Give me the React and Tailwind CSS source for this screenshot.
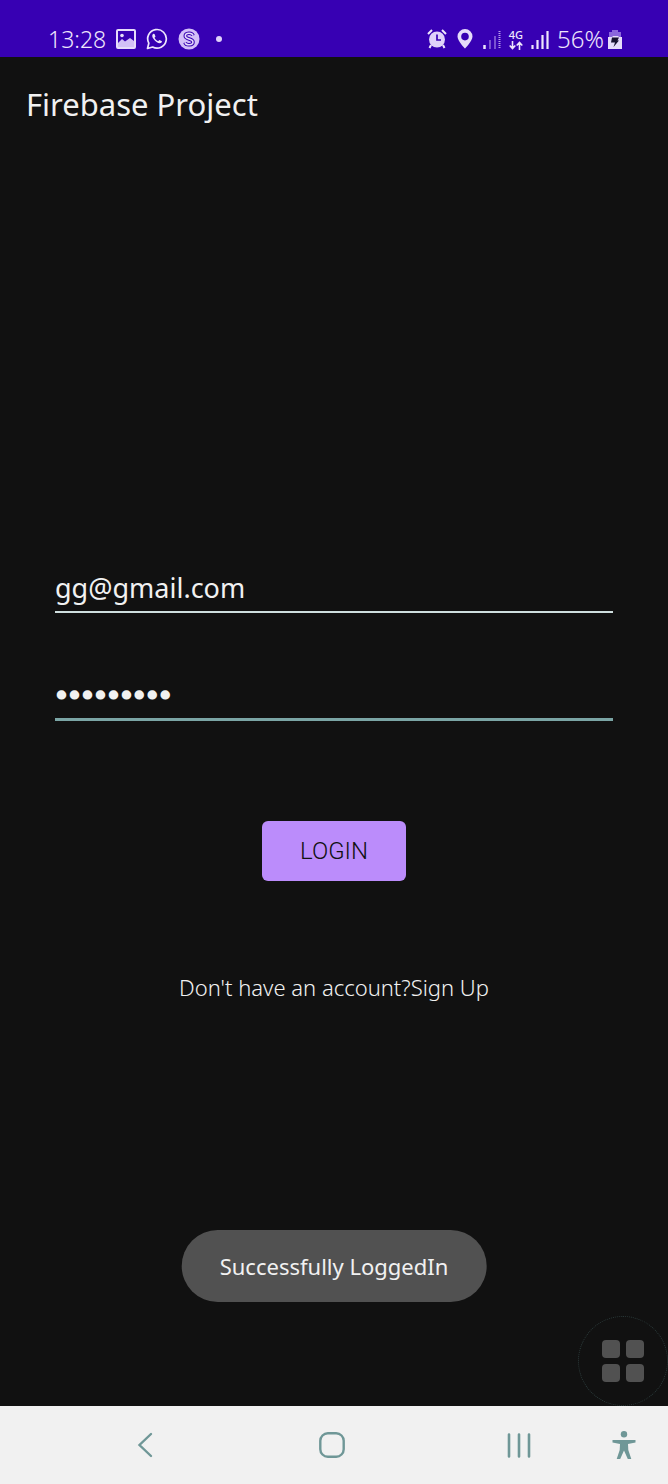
function ImageIcon() {
  return (
    <svg width="20" height="20" viewBox="0 0 20 20" aria-hidden="true">
      <rect x="1" y="1" width="18" height="18" rx="1" fill="none" stroke="#e6dcfa" strokeWidth="2" />
      <circle cx="6" cy="6.5" r="1.8" fill="#e6dcfa" />
      <path d="M2 14l4-4 3 2.500 5-3.500L18 12v6H2z" fill="#d3c0f7" />
    </svg>
  );
}

function ChatIcon() {
  return (
    <svg width="22" height="22" viewBox="0 0 22 22" aria-hidden="true">
      <path d="M1.500 20.500l1.300-5.300A9.300 9.300 0 1 1 6.600 19z" fill="none" stroke="#eee6fc" strokeWidth="1.700" strokeLinejoin="round" />
      <path d="M7.300 5.800c-1.500 1-1.400 3 .3 5.300 1.700 2.400 4.200 4.200 6.200 4.200 1.200 0 2.100-.8 2.200-2l-2.600-1.400-1.300 1.300c-1.700-.7-2.900-2-3.600-3.500l1-1.300-1-2.500z" fill="#eee6fc" />
    </svg>
  );
}

function CoinIcon() {
  return (
    <svg width="22" height="22" viewBox="0 0 22 22" aria-hidden="true">
      <circle cx="11" cy="11" r="10.500" fill="#d3bff8" />
      <path d="M15 7.500C14 4.300 7.300 4.500 7.300 8c0 3.700 7.700 2.300 7.700 6 0 3.500-7 3.800-8 .5" fill="none" stroke="#3700b3" strokeWidth="3.600" />
      <path d="M15 7.500C14 4.300 7.300 4.500 7.300 8c0 3.700 7.700 2.300 7.700 6 0 3.500-7 3.800-8 .5" fill="none" stroke="#e6dcfa" strokeWidth="1.500" />
    </svg>
  );
}

function AlarmIcon() {
  return (
    <svg width="20" height="20" viewBox="0 0 20 20" aria-hidden="true">
      <circle cx="10" cy="10.500" r="8" fill="#e0d2fa" />
      <path d="M1 5l4-4M19 5l-4-4M4 16l-1.500 3M16 16l1.500 3" stroke="#eee6fc" strokeWidth="2" />
      <path d="M10 5.500V11h4" fill="none" stroke="#3700b3" strokeWidth="1.700" />
    </svg>
  );
}

function PinIcon() {
  return (
    <svg width="16" height="20" viewBox="0 0 16 20" aria-hidden="true">
      <path fillRule="evenodd" d="M8 0a7.500 7.500 0 0 0-7.500 7.500C.5 12 8 19.500 8 19.500S15.500 12 15.500 7.500A7.500 7.500 0 0 0 8 0zm0 3.800a3.800 3.800 0 1 1 0 7.600 3.800 3.800 0 0 1 0-7.600z" fill="#e6dcfa" />
    </svg>
  );
}

function WeakSignalIcon() {
  return (
    <svg width="18" height="19" viewBox="0 0 18 19" aria-hidden="true">
      <path d="M1.500 15v4" stroke="#eee6fc" strokeWidth="2.500" />
      <path d="M7 10v9M12 6v13" stroke="#9d7fe0" strokeWidth="1.300" />
      <path d="M16.500 1v18" stroke="#b9a0ec" strokeWidth="2" strokeDasharray="1 1" />
    </svg>
  );
}

function DataArrowsIcon() {
  return (
    <svg width="14" height="9" viewBox="0 0 14 9" aria-hidden="true">
      <path d="M3.500 0v7M.7 4.500l2.800 3 2.800-3M10.500 9V2M7.700 4.500l2.800-3 2.800 3" fill="none" stroke="#eee6fc" strokeWidth="1.600" />
    </svg>
  );
}

function SignalIcon() {
  return (
    <svg width="18" height="19" viewBox="0 0 18 19" aria-hidden="true">
      <path d="M1.500 15v4" stroke="#eee6fc" strokeWidth="2.200" />
      <path d="M6.500 10v9M11.500 5v14M16.500 1v18" stroke="#eee6fc" strokeWidth="2.200" />
    </svg>
  );
}

function BatteryIcon() {
  return (
    <svg width="14" height="20" viewBox="0 0 14 20" aria-hidden="true">
      <path d="M4 1h6v2h3v5H1V3h3z" fill="#8b66dc" />
      <path d="M0 8h4l1-1h5l1 1h3v12H0z" fill="#e6dcfa" />
      <path d="M4 8.500h7L9.500 11.500h1.500L5.500 18l1.500-4.500H3z" fill="#171130" />
    </svg>
  );
}

function BackIcon() {
  return (
    <svg width="16" height="26" viewBox="0 0 16 26" aria-hidden="true">
      <path d="M14 2L2.500 13 14 24" fill="none" stroke="#6f9797" strokeWidth="2.400" strokeLinecap="round" />
    </svg>
  );
}

function HomeIcon() {
  return (
    <svg width="26" height="26" viewBox="0 0 26 26" aria-hidden="true">
      <rect x="1.300" y="1.300" width="23.400" height="23.400" rx="7.500" fill="none" stroke="#6f9797" strokeWidth="2.400" />
    </svg>
  );
}

function RecentsIcon() {
  return (
    <svg width="24" height="25" viewBox="0 0 24 25" aria-hidden="true">
      <path d="M2 1.500v22M12 1.500v22M22 1.500v22" stroke="#6f9797" strokeWidth="2.600" strokeLinecap="round" />
    </svg>
  );
}

function PersonIcon() {
  return (
    <svg width="24" height="28" viewBox="0 0 24 28" aria-hidden="true">
      <circle cx="12" cy="3.300" r="3.200" fill="#6f9797" />
      <path d="M.5 9h23v2.500L16 13l.3 6 3 9h-3.500L12 19.500 8.200 28H4.700l3-9 .3-6L.5 11.500z" fill="#6f9797" />
    </svg>
  );
}

function StatusBar() {
  return (
    <header className="flex h-[57px] items-end justify-between bg-[#3700b3] pb-1 pl-12 pr-[46px] text-[#eee6fc]">
      <div className="flex h-7 items-center gap-2.5">
        <span className="text-[23px] font-light leading-7">13:28</span>
        <ImageIcon />
        <ChatIcon />
        <CoinIcon />
        <span className="ml-1.5 size-1.5 rounded-full bg-[#e0d2fa]" />
      </div>
      <div className="flex h-7 items-center gap-2">
        <div className="flex items-center gap-2.5">
          <AlarmIcon />
          <PinIcon />
          <WeakSignalIcon />
        </div>
        <div className="flex flex-col items-center">
          <span className="text-[11px] font-medium leading-3">4G</span>
          <DataArrowsIcon />
        </div>
        <SignalIcon />
        <div className="flex items-center gap-1">
          <span className="text-2xl font-light leading-7">56%</span>
          <BatteryIcon />
        </div>
      </div>
    </header>
  );
}

export default function App() {
  return (
    <div className="relative flex min-h-screen flex-col bg-[#111111] font-['Noto_Sans',sans-serif] text-[#f1f1f1]">
      <StatusBar />
      <h1 className="px-[26px] py-[27px] text-[31px] leading-10">Firebase Project</h1>

      <main className="flex flex-1 flex-col justify-center px-[55px]">
        <form className="flex flex-col items-center" onSubmit={(e) => e.preventDefault()}>
          <input
            type="email"
            aria-label="Email"
            defaultValue="gg@gmail.com"
            className="h-[60px] w-full border-b-2 border-[#cfdede] bg-transparent pt-3 text-[27px] outline-none"
          />
          <input
            type="password"
            aria-label="Password"
            defaultValue="123456789"
            className="mt-12 h-[60px] w-full border-b-3 border-[#7ba5a5] bg-transparent pt-3 font-['DejaVu_Sans',sans-serif] text-[22px] outline-none [-webkit-text-stroke:3px_#f1f1f1]"
          />
          <button type="submit" className="mt-[100px] h-[60px] w-36 rounded-md bg-[#bb8cfb] font-[Roboto,sans-serif] text-2xl font-light text-[#111111]">
            LOGIN
          </button>
          <p className="mt-[88px] text-[22px] font-light leading-9">
            Don't have an account?<a href="#signup">Sign Up</a>
          </p>
        </form>
      </main>

      <div role="status" className="absolute bottom-[182px] left-1/2 -translate-x-1/2 whitespace-nowrap rounded-full bg-[#515151] px-[38px] py-[18px] text-[22px] leading-9">
        Successfully LoggedIn
      </div>

      <button type="button" aria-label="Shortcuts" className="absolute bottom-[78px] right-0 flex size-[90px] items-center justify-center rounded-full border border-dotted border-[#2b3a3a]">
        <span className="grid grid-cols-2 gap-1.5">
          <span className="size-[18px] rounded bg-[#515151]" />
          <span className="size-[18px] rounded bg-[#515151]" />
          <span className="size-[18px] rounded bg-[#515151]" />
          <span className="size-[18px] rounded bg-[#515151]" />
        </span>
      </button>

      <nav aria-label="System" className="flex h-[78px] items-center bg-[#f1f1f1] pl-[52px] pr-8">
        <div className="grid flex-1 grid-cols-3 justify-items-center">
          <button type="button" aria-label="Back"><BackIcon /></button>
          <button type="button" aria-label="Home"><HomeIcon /></button>
          <button type="button" aria-label="Recent apps"><RecentsIcon /></button>
        </div>
        <button type="button" aria-label="Accessibility"><PersonIcon /></button>
      </nav>
    </div>
  );
}
